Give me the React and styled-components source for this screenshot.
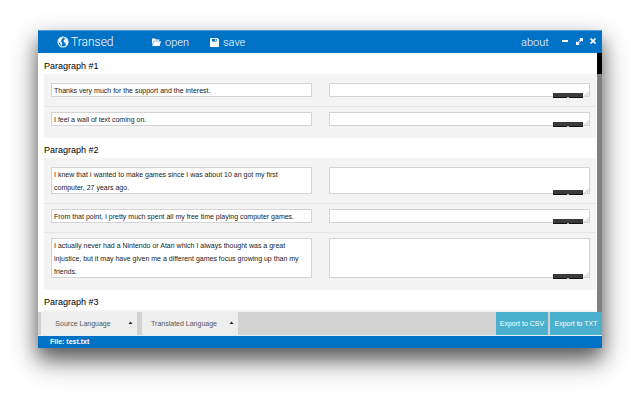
import React from 'react'
import styled, { createGlobalStyle } from 'styled-components'

const GlobalStyle = createGlobalStyle`
* {
  box-sizing: border-box;
}
body {
  margin: 0;
  background: #ffffff;
  font-family: "Liberation Sans", Arial, sans-serif;
}
button, select, textarea {
  font-family: inherit;
  margin: 0;
}
`

const Desktop = styled.div`
min-height: 100vh;
padding: 30px 38px 52px;
display: flex;
overflow: hidden;
`

const Window = styled.div`
flex: 1;
min-width: 0;
height: calc(100vh - 82px);
display: flex;
flex-direction: column;
background: #ffffff;
box-shadow: 0 10px 18px rgb(0 0 0 / 50%), 0 14px 28px rgb(0 0 0 / 30%);
`

const TitleBar = styled.header`
flex: none;
height: 23px;
padding: 0 5px 0 19px;
display: flex;
align-items: center;
background: #0072c6;
border-top: 1px solid #4a9edb;
color: #ffffff;
font-family: Roboto, "Liberation Sans", sans-serif;
font-weight: 300;
`

const Brand = styled.h1`
width: 95px;
margin: 0;
display: flex;
align-items: center;
gap: 2px;
font-size: 12px;
font-weight: 300;
`

const MenuButton = styled.button`
width: ${props => props.$width};
padding: 0;
border: 0;
display: flex;
align-items: center;
gap: 4px;
background: none;
color: inherit;
font-size: 11px;
font-weight: 300;
cursor: pointer;
`

const WindowButtons = styled.div`
margin-left: auto;
display: flex;
align-items: center;
gap: 6px;
`

const IconButton = styled.button`
width: 8px;
height: 12px;
padding: 0 0 2px;
border: 0;
display: flex;
align-items: center;
justify-content: center;
background: none;
color: #ffffff;
cursor: pointer;
`

const Body = styled.div`
flex: 1;
min-height: 0;
display: flex;
`

const Document = styled.main`
flex: 1;
min-width: 0;
padding: 1px 1px 0 6px;
overflow: hidden;
`

const ScrollTrack = styled.div`
width: 5px;
background: #808080;
`

const ScrollThumb = styled.div`
height: 21px;
background: #000000;
`

const Heading = styled.h2`
height: 20px;
margin: 0;
font-size: 9px;
line-height: 25px;
font-weight: 400;
color: #000000;
`

const Group = styled.section`
padding: 4px 0 3px;
background: #f4f4f4;
`

const Row = styled.div`
padding: 5px 6px 9px 7px;
display: grid;
grid-template-columns: 1fr 1fr;
gap: 17px;
border-bottom: 1px solid #e6e6e6;

&:last-child {
  border-bottom: 0;
}
`

const Cell = styled.div`
position: relative;
display: flex;
`

const TextBox = styled.textarea`
width: 100%;
padding: 1px 3px 0;
border: 0;
box-shadow: inset 0 0 0 1px #d4d4d4;
display: block;
background: #ffffff;
color: #222222;
font-size: 7px;
line-height: 13px;
resize: none;
overflow: hidden;
outline: none;
`

const Counter = styled.span`
position: absolute;
right: 7px;
bottom: -1px;
width: 30px;
height: 5px;
background: #3a3a3a;
border-bottom: 1px solid #111111;

&:after {
  content: "";
  position: absolute;
  left: 14px;
  bottom: -1px;
  width: 2px;
  height: 1px;
  background: #aaaaaa;
}
`

const Grip = styled.svg`
position: absolute;
right: 1px;
bottom: 1px;
`

const Toolbar = styled.div`
flex: none;
height: 24px;
padding-left: 3px;
display: flex;
background: #d2d2d2;
border-bottom: 1px solid #e4eef5;
`

const SelectWrap = styled.label`
width: 96px;
margin-right: 5px;
position: relative;
display: flex;
background: #eeeeee;

svg {
  position: absolute;
  right: 4px;
  top: 9px;
  pointer-events: none;
}
`

const Select = styled.select`
width: 100%;
padding: 0 12px 0 0;
border: 0;
appearance: none;
background: none;
color: #555555;
font-size: 7px;
line-height: 12px;
text-align: center;
text-align-last: center;
outline: none;
`

const Exports = styled.div`
margin-left: auto;
display: flex;
gap: 2px;
`

const ExportButton = styled.button`
width: 52px;
padding: 0;
border: 0;
background: #4bb0cd;
color: #ffffff;
font-size: 7px;
cursor: pointer;
`

const StatusBar = styled.footer`
flex: none;
height: 12px;
padding-left: 12px;
background: #0072c6;
color: #ffffff;
font-size: 7px;
line-height: 11px;
font-weight: 700;
`

const paragraphs = [
  {
    title: 'Paragraph #1',
    rows: [
      { text: 'Thanks very much for the support and the interest.', lines: 1 },
      { text: 'I feel a wall of text coming on.', lines: 1 },
    ],
  },
  {
    title: 'Paragraph #2',
    rows: [
      { text: 'I knew that I wanted to make games since I was about 10 an got my first computer, 27 years ago.', lines: 2 },
      { text: 'From that point, I pretty much spent all my free time playing computer games.', lines: 1 },
      { text: 'I actually never had a Nintendo or Atari which I always thought was a great injustice, but it may have given me a different games focus growing up than my friends.', lines: 3 },
    ],
  },
  { title: 'Paragraph #3', rows: [{ text: '', lines: 1 }] },
]

const GlobeIcon = () => (
  <svg width="12" height="12" viewBox="0 0 12 12">
    <circle cx="6" cy="6" r="5" fill="none" stroke="#ffffff" strokeWidth="1.1" />
    <path d="M2 3.2L4 1.4L6 1.6L5.6 2.8L4.4 3.6L4.6 4.6L3.4 5.2L4.6 6.2L5.4 7.4L4.6 9.6L3.8 9.8L3.4 7.6L1.8 6Z" fill="#ffffff" />
    <path d="M7.2 2.2L9.4 2.8L10.8 5L10.6 7.4L9.4 9L8.6 8.4L8.4 6.8L6.8 6.2L6.6 4.6L7.8 3.6Z" fill="#ffffff" />
  </svg>
)

const FolderIcon = () => (
  <svg width="9" height="8" viewBox="0 0 9 8">
    <path d="M0 0.4H3.2L4 1.4H7.4V2.8H1.8L0 6.8Z" fill="#ffffff" />
    <path d="M2 3.2H9L7.6 8H0.2Z" fill="#ffffff" />
  </svg>
)

const SaveIcon = () => (
  <svg width="9" height="9" viewBox="0 0 9 9">
    <path fillRule="evenodd" d="M0.5 0H7.5L9 1.5V8.5L8.5 9H0.5L0 8.5V0.5ZM2 1V3.4H7V1ZM5.2 1.2H6.4V3H5.2Z" fill="#ffffff" />
  </svg>
)

const MinimizeIcon = () => (
  <svg width="6" height="6" viewBox="0 0 6 6"><path d="M0 2H6V4H0Z" fill="#ffffff" /></svg>
)

const MaximizeIcon = () => (
  <svg width="7" height="7" viewBox="0 0 7 7">
    <path d="M3.2 0H7V3.8L5.8 2.6L4.4 4L3 2.6L4.4 1.2ZM0 3.2L1.2 4.4L2.4 3.2L3.8 4.6L2.6 5.8L3.8 7H0Z" fill="#ffffff" />
  </svg>
)

const CloseIcon = () => (
  <svg width="6" height="6" viewBox="0 0 6 6"><path d="M0.5 0.5L5.5 5.5M5.5 0.5L0.5 5.5" stroke="#ffffff" strokeWidth="1.7" /></svg>
)

const Sentence = ({ text, lines }) => (
  <Row>
    <Cell>
      <TextBox aria-label="Source text" rows={lines} defaultValue={text} readOnly />
    </Cell>
    <Cell>
      <TextBox aria-label="Translation" rows={lines} />
      <Grip width="5" height="5" viewBox="0 0 5 5" stroke="#aaaaaa" strokeWidth="0.7">
        <path d="M0.5 5L5 0.5M2.8 5L5 2.8" />
      </Grip>
      <Counter />
    </Cell>
  </Row>
)

const LanguageSelect = ({ name }) => (
  <SelectWrap>
    <Select aria-label={name}>
      <option>{name}</option>
    </Select>
    <svg width="5" height="3" viewBox="0 0 5 3"><path d="M0.5 3L2.5 0.5L4.5 3Z" fill="#222222" /></svg>
  </SelectWrap>
)

const App = () => {
  return (
    <>
      <GlobalStyle />
      <Desktop>
        <Window>
          <TitleBar>
            <Brand><GlobeIcon />Transed</Brand>
            <MenuButton $width="58px"><FolderIcon />open</MenuButton>
            <MenuButton $width="40px"><SaveIcon />save</MenuButton>
            <WindowButtons>
              <MenuButton $width="34px">about</MenuButton>
              <IconButton aria-label="Minimize"><MinimizeIcon /></IconButton>
              <IconButton aria-label="Maximize"><MaximizeIcon /></IconButton>
              <IconButton aria-label="Close"><CloseIcon /></IconButton>
            </WindowButtons>
          </TitleBar>
          <Body>
            <Document>
              {paragraphs.map(p => (
                <React.Fragment key={p.title}>
                  <Heading>{p.title}</Heading>
                  <Group>
                    {p.rows.map((row, i) => <Sentence key={i} {...row} />)}
                  </Group>
                </React.Fragment>
              ))}
            </Document>
            <ScrollTrack><ScrollThumb /></ScrollTrack>
          </Body>
          <Toolbar>
            <LanguageSelect name="Source Language" />
            <LanguageSelect name="Translated Language" />
            <Exports>
              <ExportButton>Export to CSV</ExportButton>
              <ExportButton>Export to TXT</ExportButton>
            </Exports>
          </Toolbar>
          <StatusBar>File: test.txt</StatusBar>
        </Window>
      </Desktop>
    </>
  )
}

export default App
